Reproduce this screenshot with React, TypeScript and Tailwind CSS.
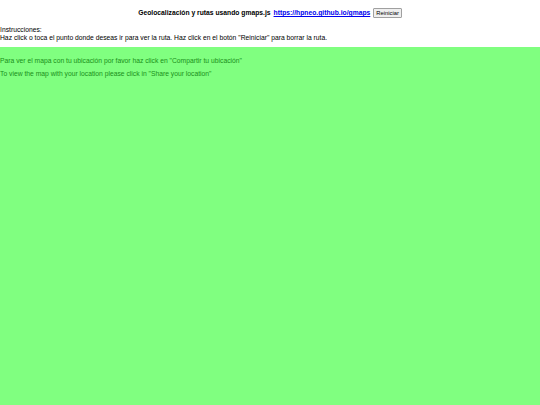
import React from 'react';

export default function App() {
  return (
    <div className="min-h-[405px] flex flex-col font-['Liberation_Sans',Arial,sans-serif] text-black">
      {/* header */}
      <div className="flex justify-center items-center gap-[3px] h-[18px] mt-[4px] text-[6.75px] leading-[8px]">
        <b className="font-bold">Geolocalización y rutas usando gmaps.js</b>
        <a href="#" className="font-bold text-[#0000ee] underline">https://hpneo.github.io/gmaps</a>
        <button className="h-[10px] px-[2px] text-[5.8px] leading-[8px] border border-[#a0a0a0] bg-[#efefef] rounded-[1px]">
          Reiniciar
        </button>
      </div>

      <div className="mt-[4px] text-[6.75px] leading-[8px]">
        Instrucciones:
        <br />
        Haz click o toca el punto donde deseas ir para ver la ruta. Haz click en el botón "Reiniciar" para borrar la ruta.
      </div>

      <div className="mt-[5px] flex-1 bg-[#80ff80] text-[#1a8f1a] text-[6.75px] leading-[8px] pt-[10px]">
        <p>Para ver el mapa con tu ubicación por favor haz click en "Compartir tu ubicación"</p>
        <p className="mt-[5px]">To view the map with your location please click in "Share your location"</p>
      </div>
    </div>
  );
}
